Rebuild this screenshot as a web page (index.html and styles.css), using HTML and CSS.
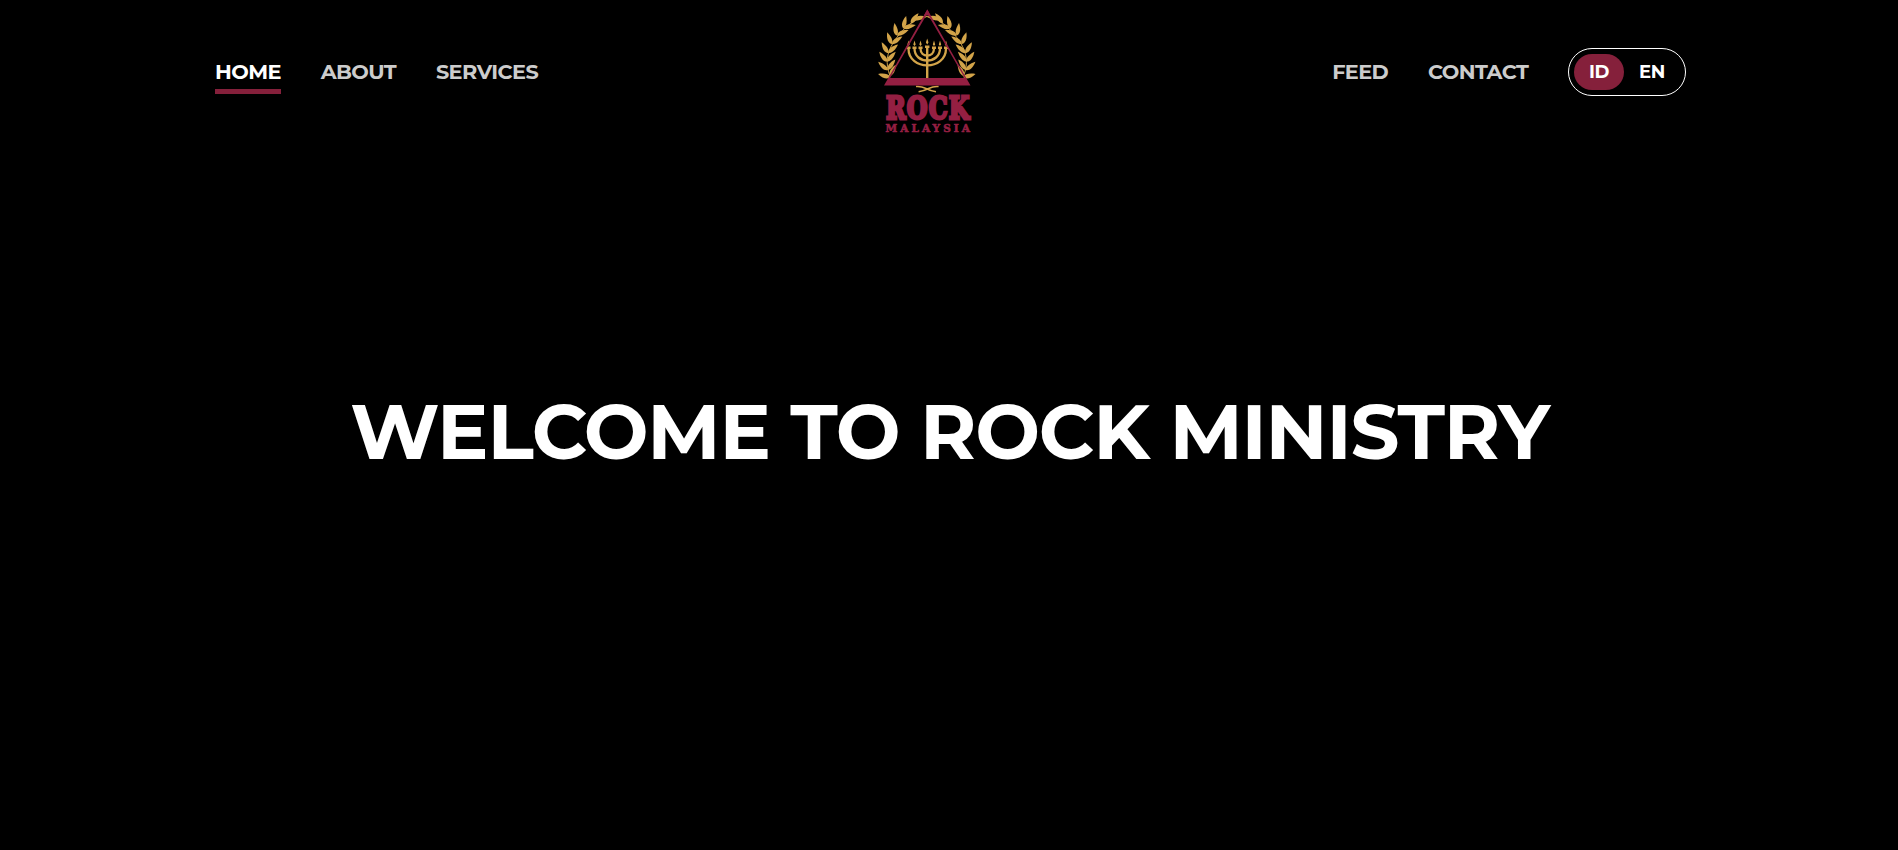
FILE: index.html
```html
<!DOCTYPE html>
<html lang="en">
<head>
<meta charset="utf-8">
<title>Rock Ministry Malaysia</title>
<link rel="stylesheet" href="styles.css">
</head>
<body>
<header class="navbar">
  <nav class="links">
    <a class="link active">HOME</a>
    <a class="link">ABOUT</a>
    <a class="link">SERVICES</a>
  </nav>
  <a class="brand" aria-label="Rock Malaysia">
    <svg class="logo" viewBox="0 0 120 144" width="120" height="144">
      <defs>
        <path id="leaf" d="M0 0C2-3.200 7-3.400 12.800 0C7 2.300 3 2.500 0 0Z"/>
        <g id="branch">
          <path d="M59 16.500C46 18 34 29 25 43C19 53 17 63 22 76" fill="none" stroke="#c99d45" stroke-width="1"/>
          <use href="#leaf" transform="translate(22.500 77) rotate(-166)"/>
          <use href="#leaf" transform="translate(22 76) rotate(-62)"/>
          <use href="#leaf" transform="translate(20 70) rotate(-140)"/>
          <use href="#leaf" transform="translate(20 70) rotate(-55)"/>
          <use href="#leaf" transform="translate(19.500 61.500) rotate(-130)"/>
          <use href="#leaf" transform="translate(19.500 61.500) rotate(-50)"/>
          <use href="#leaf" transform="translate(20.500 53) rotate(-122)"/>
          <use href="#leaf" transform="translate(20.500 53) rotate(-42)"/>
          <use href="#leaf" transform="translate(24 44) rotate(-112)"/>
          <use href="#leaf" transform="translate(24 44) rotate(-36)"/>
          <use href="#leaf" transform="translate(29 35.500) rotate(-101)"/>
          <use href="#leaf" transform="translate(29 35.500) rotate(-25)"/>
          <use href="#leaf" transform="translate(35.500 28.500) rotate(-78)"/>
          <use href="#leaf" transform="translate(35.500 28.500) rotate(-16)"/>
          <use href="#leaf" transform="translate(43 23.500) rotate(-54)"/>
          <use href="#leaf" transform="translate(46 19.500) rotate(-12)"/>
        </g>
      </defs>
      <g class="gold">
        <use href="#branch"/>
        <use href="#branch" transform="translate(117.600 0) scale(-1 1)"/>
        <path d="M58 46h2.400v32.500h-2.400z"/>
        <g class="arms">
          <path d="M40.500 48.500C40.500 71 78 71 78 48.500"/>
          <path d="M46.500 48.500C46.500 64.500 72 64.500 72 48.500"/>
          <path d="M52.500 48.500C52.500 58 66 58 66 48.500"/>
        </g>
        <path d="M38.500 46.500h4V49h-4zM44.500 46.500h4V49h-4zM50.500 46.500h4V49h-4zM57 45.500h4.400V48H57zM64 46.500h4V49h-4zM70 46.500h4V49h-4zM76 46.500h4V49h-4z"/>
        <path d="M40.500 40.500l1.200 4-1.200 1.500-1.200-1.500zM46.500 40.500l1.200 4-1.200 1.500-1.200-1.500zM52.500 40.500l1.200 4-1.200 1.500-1.200-1.500zM59.200 38.500l1.300 4-1.300 2-1.300-2zM66 40.500l1.200 4-1.200 1.500-1.200-1.500zM72 40.500l1.200 4-1.200 1.500-1.200-1.500zM78 40.500l1.200 4-1.200 1.500-1.200-1.500z"/>
        <path class="ties" d="M48 86.500Q53 86 58 88.500T68 91.800M70.600 86.500Q65.600 86 60.600 88.500T50.600 91.800"/>
      </g>
      <path class="maroon" fill-rule="evenodd" d="M59.300 9.500L102.500 85.500H16ZM59.300 13.500L22 78H96.700Z"/>
      <path class="maroon" d="M59.300 9.500L62.500 15.500H56Z"/>
      <g class="wordmark">
        <text class="rock" x="18" y="119.300" textLength="84.500" lengthAdjust="spacingAndGlyphs">ROCK</text>
        <text class="malaysia" x="17.500" y="131.600" textLength="84.500" lengthAdjust="spacing">MALAYSIA</text>
      </g>
    </svg>
  </a>
  <nav class="links right">
    <a class="link">FEED</a>
    <a class="link">CONTACT</a>
    <div class="lang"><span class="option selected">ID</span><span class="option">EN</span></div>
  </nav>
</header>
<main class="hero">
  <h1 class="title">WELCOME TO ROCK MINISTRY</h1>
</main>
</body>
</html>
```
FILE: styles.css
```css
* { box-sizing: border-box; }
body {
  margin: 0;
  height: 850px;
  display: flex;
  flex-direction: column;
  overflow: hidden;
  background: #000;
  color: #fff;
  font-family: Montserrat, Inter, sans-serif;
}
.navbar {
  height: 144px;
  padding: 0 212px 0 215px;
  display: grid;
  grid-template-columns: 652.6px 120px 1fr;
}
.links { display: flex; align-items: center; gap: 39.8px; height: 144px; }
.right { justify-content: flex-end; }
.link {
  height: 44px;
  line-height: 43px;
  font-size: 20.8px;
  font-weight: 700;
  letter-spacing: -0.58px;
  color: #ccc;
  white-space: nowrap;
}
.active { color: #fff; border-bottom: 5px solid #85203b; }
.lang {
  width: 118px;
  height: 48px;
  padding: 5px;
  display: flex;
  border: 1px solid #fff;
  border-radius: 24px;
}
.option {
  width: 50px;
  height: 36px;
  line-height: 36px;
  border-radius: 18px;
  text-align: center;
  font-size: 18px;
  font-weight: 700;
  letter-spacing: -0.3px;
  margin-right: 3px;
}
.selected { background: #85203b; }
.brand, .logo { display: block; }
.maroon { fill: #941f42; }
.gold { fill: #d3a449; }
.arms { fill: none; stroke: #d3a449; stroke-width: 2.3; }
.ties { fill: none; stroke: #d3a449; stroke-width: 1.5; }
.wordmark { fill: #941f42; font-family: "DejaVu Serif", serif; font-weight: 700; }
.rock { font-size: 31px; letter-spacing: 1.5px; stroke: #941f42; stroke-width: 3; }
.malaysia { font-size: 10.5px; stroke: #941f42; stroke-width: 0.6; }
.hero { padding-top: 248px; text-align: center; }
.title {
  margin: 0;
  padding-left: 1px;
  font-size: 76.8px;
  font-weight: 700;
  letter-spacing: -1.2px;
  line-height: 80px;
  white-space: nowrap;
}
```
